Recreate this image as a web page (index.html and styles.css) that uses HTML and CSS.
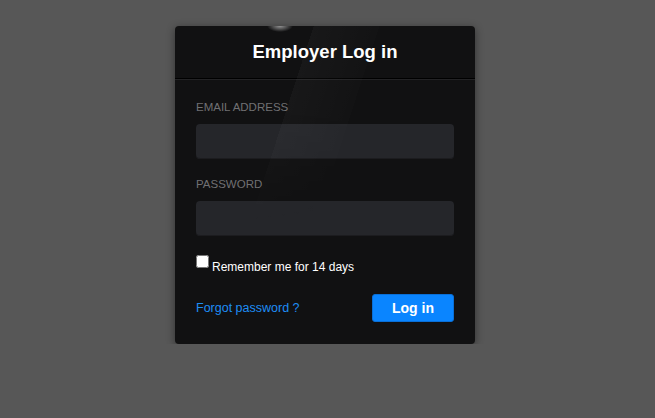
FILE: index.html
```html
<!DOCTYPE html>
<html lang="en">
<head>
  <meta charset="UTF-8" />
  <title>Employer Log in</title>
  <link rel="stylesheet" href="styles.css">
</head>
<body>
  <div class="login-box">
    <div class="login-header">
      <h1>Employer Log in</h1>
    </div>

    <form class="login-body">
      <label class="field-label" for="email">EMAIL ADDRESS</label>
      <input class="field-input" type="text" id="email" />

      <label class="field-label second" for="password">PASSWORD</label>
      <input class="field-input" type="password" id="password" />

      <div class="remember">
        <input type="checkbox" id="remember" />
        <label for="remember">Remember me for 14 days</label>
      </div>

      <div class="actions">
        <a href="#" class="forgot">Forgot password ?</a>
        <button type="button" class="login-btn">Log in</button>
      </div>
    </form>
  </div>
</body>
</html>
```

FILE: styles.css
```css
body {
  margin: 0;
  background-color: #575757;
  font-family: "Liberation Sans", Arial, sans-serif;
  display: flex;
  justify-content: center;
  padding: 26px 5px 0 0;
}

.login-box {
  position: relative;
  width: 300px;
  background-color: #111112;
  border-radius: 4px;
  box-shadow: 0 2px 8px rgba(0, 0, 0, 0.45);
  overflow: hidden;
}

/* diagonal glare across the upper half */
.login-box::before {
  content: "";
  position: absolute;
  top: 0;
  left: 0;
  right: 0;
  height: 200px;
  background: linear-gradient(108deg, transparent 38%, rgba(255, 255, 255, 0.03) 38%, rgba(255, 255, 255, 0.01) 56%, transparent 56%);
  -webkit-mask-image: linear-gradient(to bottom, #000 40%, transparent);
  mask-image: linear-gradient(to bottom, #000 40%, transparent);
  pointer-events: none;
}

/* small light spot at the top edge */
.login-box::after {
  content: "";
  position: absolute;
  top: -6px;
  left: 92px;
  width: 26px;
  height: 12px;
  background: radial-gradient(ellipse at center, rgba(255, 255, 255, 0.55), transparent 70%);
  pointer-events: none;
}

.login-header {
  height: 52px;
  display: flex;
  align-items: center;
  justify-content: center;
  border-bottom: 1px solid #000;
  box-shadow: 0 1px 0 #232325;
}

.login-header h1 {
  margin: 0;
  color: #fff;
  font-size: 18.5px;
  font-weight: bold;
}

.login-body {
  display: flex;
  flex-direction: column;
  padding: 21px 21px 22px;
}

.field-label {
  color: #707073;
  font-size: 11.5px;
  line-height: 14px;
  margin-bottom: 10px;
}

.field-label.second {
  margin-top: 18px;
}

.field-input {
  height: 35px;
  box-sizing: border-box;
  border: none;
  border-radius: 4px;
  background-color: #25262a;
  box-shadow: inset 0 -1px 0 #1c1c1f;
  color: #ddd;
  padding: 0 10px;
  outline: none;
}

.remember {
  display: flex;
  align-items: flex-start;
  margin-top: 19px;
  color: #fff;
  font-size: 12px;
}

.remember input {
  margin: 0 3px 0 0;
  width: 13px;
  height: 13px;
}

.remember label {
  margin-top: 5px;
}

.actions {
  display: flex;
  justify-content: space-between;
  align-items: center;
  margin-top: 20px;
}

.forgot {
  color: #1e8df5;
  font-size: 12.5px;
  text-decoration: none;
}

.login-btn {
  width: 82px;
  height: 28px;
  border: 1px solid #0a6fd6;
  border-radius: 3px;
  background-color: #0a85ff;
  color: #fff;
  font-family: "Liberation Sans", Arial, sans-serif;
  font-size: 14px;
  font-weight: bold;
  cursor: pointer;
}
```
